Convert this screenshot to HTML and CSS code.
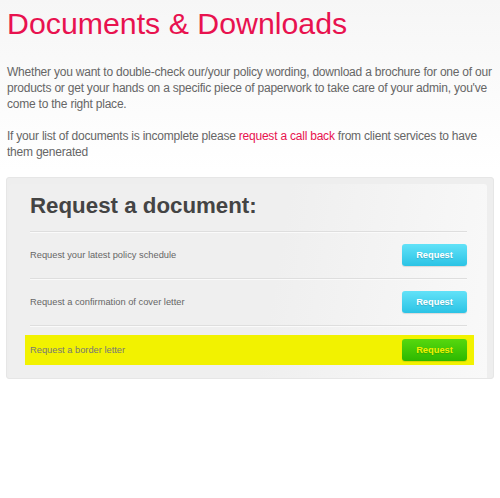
FILE: index.html
```html
<!DOCTYPE html>
<html lang="en">
    <head>
        <meta charset="utf-8" />
        <title>Documents &amp; Downloads</title>
        <link rel="stylesheet" href="styles.css">
    </head>
    <body>
        <div id="page">
            <h1 class="title">Documents &amp; Downloads</h1>

            <p class="intro">Whether you want to double-check our/your policy wording, download a brochure for one of our products or get your hands on a specific piece of paperwork to take care of your admin, you've come to the right place.</p>

            <p class="intro">If your list of documents is incomplete please <a href="#">request a call back</a> from client services to have them generated</p>

            <div id="docbox">
                <div class="docbox-inner">
                    <h2>Request a document:</h2>
                    <div class="docrow">
                        <span>Request your latest policy schedule</span>
                        <a href="#" class="btn">Request</a>
                    </div>
                    <div class="docrow">
                        <span>Request a confirmation of cover letter</span>
                        <a href="#" class="btn">Request</a>
                    </div>
                    <div class="docrow highlight">
                        <span>Request a border letter</span>
                        <a href="#" class="btn btn-green">Request</a>
                    </div>
                </div>
            </div>
        </div>
    </body>
</html>
```

FILE: styles.css
```css
* {
    margin: 0;
    padding: 0;
}

body {
    background: linear-gradient(#f6f6f6, #ffffff 170px);
    font-family: "Liberation Sans", Arial, sans-serif;
    min-height: 498px;
}

#page {
    padding: 8px 6px 0 7px;
}

h1.title {
    color: #e8124f;
    font-size: 30.3px;
    font-weight: normal;
    line-height: 32px;
}

p.intro {
    color: #666;
    font-size: 12px;
    letter-spacing: -0.22px;
    line-height: 16px;
    margin-top: 16px;
    margin-right: -2px;
}

p.intro:first-of-type {
    margin-top: 24px;
}

a {
    color: #e8124f;
    text-decoration: none;
}

#docbox {
    margin: 17px 0 0 -1px;
    background: #eeeeee;
    border: 1px solid #e6e6e6;
    border-radius: 3px;
    padding: 6px 6px 0 2px;
    height: 194px;
    overflow: hidden;
}

.docbox-inner {
    background: linear-gradient(100deg, #efefef 55%, #f9f9f9);
    border-radius: 3px;
    padding: 6px 20px 0 21px;
    height: 100%;
}

.docbox-inner h2 {
    color: #444;
    font-size: 22.3px;
    line-height: 26px;
    padding: 3px 0 12px 0;
    border-bottom: 1px solid #dedede;
    box-shadow: 0 1px 0 #fafafa;
}

.docrow {
    display: flex;
    align-items: center;
    justify-content: space-between;
    height: 46px;
    border-bottom: 1px solid #dedede;
    box-shadow: 0 1px 0 #fafafa;
    font-size: 9.3px;
    color: #666;
}

.docrow.highlight {
    height: 30px;
    margin: 9px -7px 0 -5px;
    padding: 0 7px 0 5px;
    background: #f2f200;
    border-bottom: none;
    box-shadow: none;
    color: #777;
}

.btn {
    width: 65px;
    height: 22px;
    line-height: 22px;
    text-align: center;
    border-radius: 3px;
    color: #fff;
    font-weight: bold;
    font-size: 9.3px;
    background: linear-gradient(#62e2f8, #2bc3e5);
    box-shadow: 0 1px 1px rgba(0, 0, 0, 0.12);
    text-shadow: 0 1px 1px rgba(0, 0, 0, 0.15);
}

.btn-green {
    color: #f0f000;
    background: linear-gradient(#56d80e, #2db800);
}
```
